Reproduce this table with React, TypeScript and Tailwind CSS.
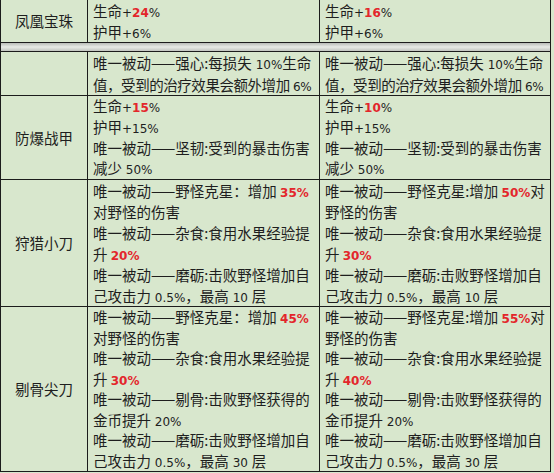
import React from "react";

const N = ({ children }: { children: React.ReactNode }) => (
  <span className="font-['DejaVu_Sans',sans-serif] text-[12px] leading-none">{children}</span>
);
const R = ({ children }: { children: React.ReactNode }) => (
  <span className="font-['DejaVu_Sans',sans-serif] text-[12px] leading-none font-bold text-[#e3262b]">{children}</span>
);

type Line = React.ReactNode;

const Cell = ({ lines, lh, w }: { lines: Line[]; lh: string; w: string }) => (
  <div className={`${w} border-l border-[#1c1c1c] pl-[5px] overflow-hidden`}>
    {lines.map((l, i) => (
      <div key={i} className={`${lh} whitespace-nowrap overflow-visible`}>
        {l}
      </div>
    ))}
  </div>
);

const Row = ({
  label,
  h,
  lh,
  left,
  right,
}: {
  label: string;
  h: string;
  lh: string;
  left: Line[];
  right: Line[];
}) => (
  <div className={`flex ${h} border-b border-[#1c1c1c]`}>
    <div className="w-[86px] flex items-center justify-center">{label}</div>
    <Cell lines={left} lh={lh} w="w-[232px]" />
    <Cell lines={right} lh={lh} w="w-[229px]" />
  </div>
);

const mopi = (n: string) => [
  <>唯一被动——磨砺:击败野怪增加自</>,
  <>
    己攻击力<N> 0.5%</N>，最高<N> {n} </N>层
  </>,
];

const qiangxin = [
  <>
    唯一被动——强心:每损失<N> 10%</N>生命
  </>,
  <span className="tracking-[-0.45px]">
    值，受到的治疗效果会额外增加<N> 6%</N>
  </span>,
];

export default function App() {
  return (
    <div className="w-[554px] h-[473px] bg-[#d8e7cd] text-[#1e1e1e] text-[14.5px] font-['Noto_Sans_CJK_SC','Noto_Sans',sans-serif]">
      <div className="w-[551px] border-l border-r border-[#1c1c1c]">
        <Row
          label="凤凰宝珠"
          h="h-[43px]"
          lh="h-[21px] leading-[21px]"
          left={[
            <>
              生命<N>+</N>
              <R>24</R>
              <N>%</N>
            </>,
            <>
              护甲<N>+6%</N>
            </>,
          ]}
          right={[
            <>
              生命<N>+</N>
              <R>16</R>
              <N>%</N>
            </>,
            <>
              护甲<N>+6%</N>
            </>,
          ]}
        />
        <div className="h-[9px] border-b border-[#1c1c1c] bg-linear-to-b from-[#b9bcb8] via-[#e8ebe6] to-[#c2c5c0]" />
        <Row label="" h="h-[44px]" lh="h-[21.5px] leading-[21.5px]" left={qiangxin} right={qiangxin} />
        <Row
          label="防爆战甲"
          h="h-[84px]"
          lh="h-[20.75px] leading-[20.75px]"
          left={[
            <>
              生命<N>+</N>
              <R>15</R>
              <N>%</N>
            </>,
            <>
              护甲<N>+15%</N>
            </>,
            <>唯一被动——坚韧:受到的暴击伤害</>,
            <>
              减少<N> 50%</N>
            </>,
          ]}
          right={[
            <>
              生命<N>+</N>
              <R>10</R>
              <N>%</N>
            </>,
            <>
              护甲<N>+15%</N>
            </>,
            <>唯一被动——坚韧:受到的暴击伤害</>,
            <>
              减少<N> 50%</N>
            </>,
          ]}
        />
        <Row
          label="狩猎小刀"
          h="h-[127px]"
          lh="h-[21px] leading-[21px]"
          left={[
            <>
              唯一被动——野怪克星：增加 <R>35%</R>
            </>,
            <>对野怪的伤害</>,
            <>唯一被动——杂食:食用水果经验提</>,
            <>
              升 <R>20%</R>
            </>,
            ...mopi("10"),
          ]}
          right={[
            <>
              唯一被动——野怪克星:增加 <R>50%</R>对
            </>,
            <>野怪的伤害</>,
            <>唯一被动——杂食:食用水果经验提</>,
            <>
              升 <R>30%</R>
            </>,
            ...mopi("10"),
          ]}
        />
        <Row
          label="剔骨尖刀"
          h="h-[165px]"
          lh="h-[20.5px] leading-[20.5px]"
          left={[
            <>
              唯一被动——野怪克星：增加 <R>45%</R>
            </>,
            <>对野怪的伤害</>,
            <>唯一被动——杂食:食用水果经验提</>,
            <>
              升 <R>30%</R>
            </>,
            <>唯一被动——剔骨:击败野怪获得的</>,
            <>
              金币提升<N> 20%</N>
            </>,
            ...mopi("30"),
          ]}
          right={[
            <>
              唯一被动——野怪克星:增加 <R>55%</R>对
            </>,
            <>野怪的伤害</>,
            <>唯一被动——杂食:食用水果经验提</>,
            <>
              升 <R>40%</R>
            </>,
            <>唯一被动——剔骨:击败野怪获得的</>,
            <>
              金币提升<N> 20%</N>
            </>,
            ...mopi("30"),
          ]}
        />
      </div>
    </div>
  );
}
